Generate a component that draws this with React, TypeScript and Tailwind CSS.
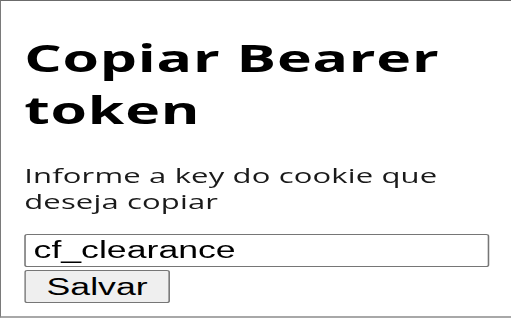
export default function App() {
  return (
    <div className="w-[512px] h-[320px] bg-white overflow-hidden">
      <div className="w-[511px] h-[318px] border-t border-l border-t-[#6b6b6b] border-l-[#7a7a7a] border-b-2 border-b-[#a8a8a8] overflow-hidden">
        <div className="w-[330px] origin-top-left scale-x-[1.55] pl-[15px] pt-[30px]">
          <h1 className="font-['Open_Sans',sans-serif] font-bold text-[38px] leading-[52px] tracking-[0.5px] text-black">
            Copiar Bearer token
          </h1>
          <p className="mt-[28px] font-['Open_Sans',sans-serif] text-[20px] leading-[26px] tracking-[0.1px] text-[#1a1a1a]">
            Informe a key do cookie que deseja copiar
          </p>
          <div className="mt-[19px] flex flex-col gap-[3px] items-start">
            <input
              defaultValue="cf_clearance"
              className="w-[300px] h-[33px] border border-[#767676] rounded-[2px] pl-[5px] font-['Liberation_Sans',Arial,sans-serif] text-[23px] text-black bg-white outline-none"
            />
            <button className="w-[94px] h-[33px] border border-[#767676] rounded-[2px] bg-[#efefef] font-['Liberation_Sans',Arial,sans-serif] text-[23px] leading-[28px] text-black">
              Salvar
            </button>
          </div>
        </div>
      </div>
    </div>
  );
}
